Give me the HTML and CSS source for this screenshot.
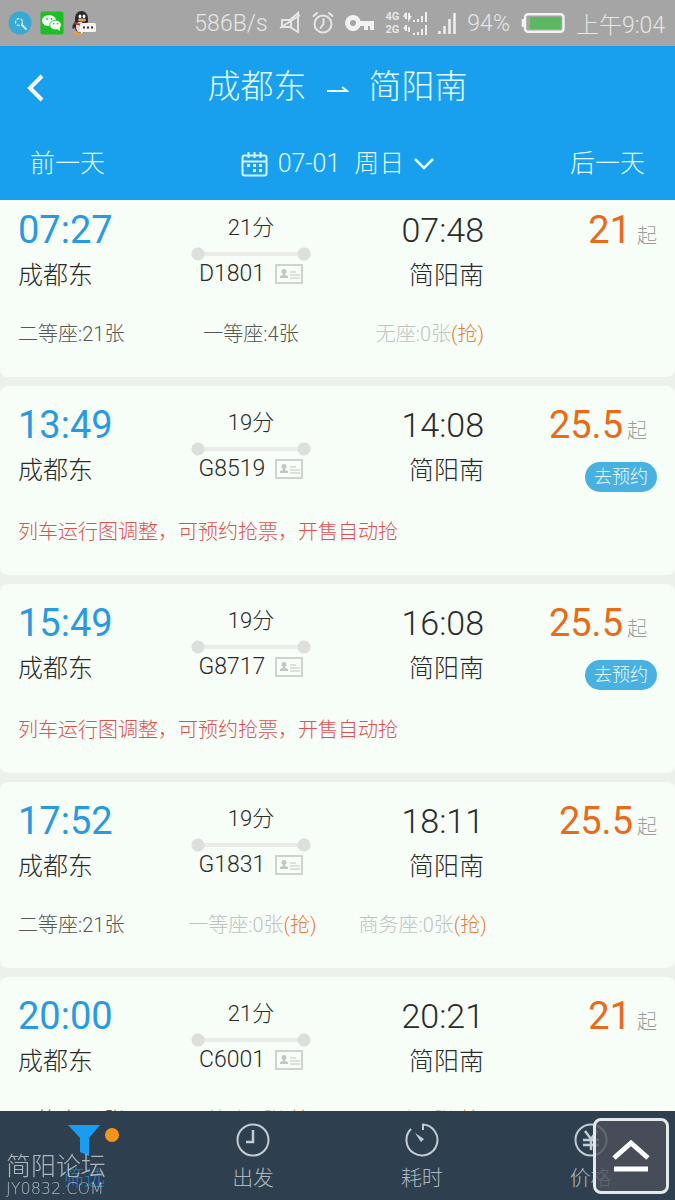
FILE: index.html
```html
<!DOCTYPE html>
<html lang="zh-CN">
<head>
    <meta charset="UTF-8">
    <meta name="viewport" content="width=device-width, initial-scale=1.0">
    <title>成都东 - 简阳南</title>
    <link rel="stylesheet" href="styles.css">
</head>
<body>
    <svg class="sprite" width="0" height="0" aria-hidden="true">
        <symbol id="id-card" viewBox="0 0 28 20">
            <rect x="1" y="1" width="26" height="18" fill="none" stroke="#cfd3cf" stroke-width="2"/>
            <circle cx="9" cy="7.500" r="2.500" fill="#c3c7c3"/>
            <path d="M8 9h2v2l3 1v2H5v-2l3-1z" fill="#c3c7c3"/>
            <path d="M15 8h6M15 11h10M15 14h10" stroke="#d3d7d3" stroke-width="1.500"/>
        </symbol>
    </svg>

    <div class="status-bar">
        <div class="status-apps">
            <svg width="24" height="24" viewBox="0 0 24 24">
                <circle cx="12" cy="12" r="11.500" fill="#36a9d4"/>
                <circle cx="11" cy="11" r="3.500" fill="none" stroke="#c9ecf8" stroke-width="1.300" stroke-dasharray="3 1.500"/>
                <path d="M14 14l4 4" stroke="#c9ecf8" stroke-width="2" stroke-linecap="round"/>
            </svg>
            <svg width="24" height="24" viewBox="0 0 24 24">
                <rect x="0.500" y="0.500" width="23" height="23" rx="2" fill="#1fbe27"/>
                <path d="M4 15l1-3h3z" fill="#f2fff2"/>
                <ellipse cx="9" cy="9.500" rx="7" ry="5.500" fill="#f2fff2"/>
                <ellipse cx="15.500" cy="14" rx="5.800" ry="4.800" fill="#f2fff2" stroke="#1fbe27" stroke-width="0.800"/>
                <path d="M17 18l3 2v-3z" fill="#f2fff2"/>
                <circle cx="7" cy="8" r="0.900" fill="#1fbe27"/>
                <circle cx="11.500" cy="8" r="0.900" fill="#1fbe27"/>
                <circle cx="13.800" cy="12.800" r="0.800" fill="#1fbe27"/>
                <circle cx="17.500" cy="12.800" r="0.800" fill="#1fbe27"/>
            </svg>
            <svg width="24" height="24" viewBox="0 0 24 24">
                <ellipse cx="6" cy="22" rx="4" ry="2" fill="#e9a13a"/>
                <path d="M2 12c-2 3-2 5-1 6l3-3z" fill="#33272a"/>
                <ellipse cx="9" cy="14" rx="7" ry="8" fill="#3b2b2c"/>
                <ellipse cx="8" cy="16" rx="4" ry="5.500" fill="#e8ddd6"/>
                <path d="M3 8c0-5 3-8 6.500-8S16 3 16 8v3H3z" fill="#252a33"/>
                <ellipse cx="8" cy="5.500" rx="1.400" ry="2" fill="#fff"/>
                <ellipse cx="12" cy="5.500" rx="1.400" ry="2" fill="#fff"/>
                <ellipse cx="10" cy="9" rx="4" ry="1.500" fill="#e9a13a"/>
                <path d="M3 11c4 2 9 2 13 0v2c-4 2-9 2-13 0z" fill="#b5392f"/>
                <rect x="8" y="12" width="16" height="9" rx="1.500" fill="#f6f3ee"/>
                <path d="M9 20v3l4-3z" fill="#f6f3ee"/>
                <path d="M11 16.500h2M15 16.500h2M19 16.500h2" stroke="#333" stroke-width="2"/>
            </svg>
        </div>
        <div class="status-info">
            <span>586B/s</span>
            <svg width="22" height="24" viewBox="0 0 22 24" fill="none" stroke="#e6e6e6" stroke-width="2">
                <path d="M19 2v19l-8-5H3V9h8z"/>
                <path d="M1 17L21 4M12 9v7"/>
            </svg>
            <svg width="22" height="24" viewBox="0 0 22 24" fill="none" stroke="#e6e6e6" stroke-width="2" stroke-linecap="round">
                <circle cx="11" cy="13" r="8.500"/>
                <path d="M11.500 8v5l-3 4M1.500 5L5 2M17 2l3.500 3"/>
            </svg>
            <svg width="30" height="20" viewBox="0 0 30 20">
                <path d="M8 2a8 8 0 1 0 7.500 11H19v4h4v-4h2v4h4V8H15.500A8 8 0 0 0 8 2zm0 5a3 3 0 1 1 0 6 3 3 0 0 1 0-6z" fill="#f2f2f2" fill-rule="evenodd"/>
            </svg>
            <div class="sims">
                <div class="sim">4G
                    <svg width="24" height="10" viewBox="0 0 24 10" stroke="#eee" stroke-width="2"><path d="M1 5l2-4v6M6 1v6l2-3M11 10V8M15 10V7M19 10V4M23 10V0" fill="none"/></svg>
                </div>
                <div class="sim">2G
                    <svg width="24" height="10" viewBox="0 0 24 10" stroke="#eee" stroke-width="2"><path d="M1 4l2-3v5M6 2v5M11 10V8M15 10V7M19 10V4M23 10V0" fill="none"/></svg>
                </div>
            </div>
            <svg width="18" height="22" viewBox="0 0 18 22" stroke="#efefef" stroke-width="2.500">
                <path d="M1.500 22v-3M6.500 22v-8M11.500 22V7M16.500 22V1"/>
            </svg>
            <span>94%</span>
            <svg width="44" height="20" viewBox="0 0 44 20">
                <rect x="4" y="1.200" width="38.500" height="17.600" rx="3" fill="#a5a5a5" stroke="#f2f2f2" stroke-width="2.400"/>
                <path d="M2 6v8" stroke="#f2f2f2" stroke-width="2.500"/>
                <rect x="9" y="4" width="31" height="12" fill="#5cb860"/>
            </svg>
            <span>上午9:04</span>
        </div>
    </div>

    <header class="header">
        <div class="title-row">
            <button class="icon-button" aria-label="返回">
                <svg width="20" height="28" viewBox="0 0 20 28" fill="none" stroke="#fff" stroke-width="4">
                    <path d="M18 2L6 14l12 12"/>
                </svg>
            </button>
            <h1 class="route">
                <span>成都东</span>
                <svg class="route-arrow" width="22" height="8" viewBox="0 0 22 8" fill="none" stroke="#e2fcff" stroke-width="2"><path d="M0 6h20l-5-4"/></svg>
                <span>简阳南</span>
            </h1>
        </div>
        <div class="date-row">
            <button class="day-button">前一天</button>
            <button class="day-button date-button">
                <svg width="27" height="25" viewBox="0 0 27 25" fill="none" stroke="#d8f6ff" stroke-width="2">
                    <rect x="1.500" y="3.500" width="24" height="20" rx="2"/>
                    <path d="M1.500 9.500h24M7.500 0v6M13.500 0v6M19.500 0v6"/>
                    <path d="M6 13.500h3M12 13.500h3M18 13.500h3M12 18.500h3M18 18.500h3" stroke-width="3"/>
                </svg>
                <span>07-01</span>
                <span class="weekday">周日</span>
                <svg width="20" height="12" viewBox="0 0 20 12" fill="none" stroke="#e2fcff" stroke-width="2.500"><path d="M1 1l9 9 9-9"/></svg>
            </button>
            <button class="day-button">后一天</button>
        </div>
    </header>

    <main class="train-list">
        <article class="train-card">
            <div class="train-head">
                <div class="depart">
                    <div class="time">07:27</div>
                    <div class="station">成都东</div>
                </div>
                <div class="journey">
                    <div class="duration">21分</div>
                    <div class="track"></div>
                    <div class="train-no">D1801 <svg width="28" height="20"><use href="#id-card"/></svg></div>
                </div>
                <div class="arrive">
                    <div class="time">07:48</div>
                    <div class="station">简阳南</div>
                </div>
                <div class="price-box">
                    <div class="price">21<span class="from spaced">起</span></div>
                </div>
            </div>
            <div class="seats">
                <div class="seat">二等座:21张</div>
                <div class="seat">一等座:4张</div>
                <div class="seat sold-out">无座:0张<span class="grab">(抢)</span></div>
            </div>
        </article>

        <article class="train-card">
            <div class="train-head">
                <div class="depart">
                    <div class="time">13:49</div>
                    <div class="station">成都东</div>
                </div>
                <div class="journey">
                    <div class="duration">19分</div>
                    <div class="track"></div>
                    <div class="train-no">G8519 <svg width="28" height="20"><use href="#id-card"/></svg></div>
                </div>
                <div class="arrive">
                    <div class="time">14:08</div>
                    <div class="station">简阳南</div>
                </div>
                <div class="price-box bookable">
                    <div class="price">25.5<span class="from">起</span></div>
                    <button class="book-button">去预约</button>
                </div>
            </div>
            <p class="notice">列车运行图调整，可预约抢票，开售自动抢</p>
        </article>

        <article class="train-card">
            <div class="train-head">
                <div class="depart">
                    <div class="time">15:49</div>
                    <div class="station">成都东</div>
                </div>
                <div class="journey">
                    <div class="duration">19分</div>
                    <div class="track"></div>
                    <div class="train-no">G8717 <svg width="28" height="20"><use href="#id-card"/></svg></div>
                </div>
                <div class="arrive">
                    <div class="time">16:08</div>
                    <div class="station">简阳南</div>
                </div>
                <div class="price-box bookable">
                    <div class="price">25.5<span class="from">起</span></div>
                    <button class="book-button">去预约</button>
                </div>
            </div>
            <p class="notice">列车运行图调整，可预约抢票，开售自动抢</p>
        </article>

        <article class="train-card">
            <div class="train-head">
                <div class="depart">
                    <div class="time">17:52</div>
                    <div class="station">成都东</div>
                </div>
                <div class="journey">
                    <div class="duration">19分</div>
                    <div class="track"></div>
                    <div class="train-no">G1831 <svg width="28" height="20"><use href="#id-card"/></svg></div>
                </div>
                <div class="arrive">
                    <div class="time">18:11</div>
                    <div class="station">简阳南</div>
                </div>
                <div class="price-box">
                    <div class="price">25.5<span class="from">起</span></div>
                </div>
            </div>
            <div class="seats">
                <div class="seat">二等座:21张</div>
                <div class="seat sold-out">一等座:0张<span class="grab">(抢)</span></div>
                <div class="seat sold-out">商务座:0张<span class="grab">(抢)</span></div>
            </div>
        </article>

        <article class="train-card">
            <div class="train-head">
                <div class="depart">
                    <div class="time">20:00</div>
                    <div class="station">成都东</div>
                </div>
                <div class="journey">
                    <div class="duration">21分</div>
                    <div class="track"></div>
                    <div class="train-no">C6001 <svg width="28" height="20"><use href="#id-card"/></svg></div>
                </div>
                <div class="arrive">
                    <div class="time">20:21</div>
                    <div class="station">简阳南</div>
                </div>
                <div class="price-box">
                    <div class="price">21<span class="from spaced">起</span></div>
                </div>
            </div>
            <div class="seats">
                <div class="seat">二等座:21张</div>
                <div class="seat sold-out">一等座:0张<span class="grab">(抢)</span></div>
                <div class="seat sold-out">无座:0张<span class="grab">(抢)</span></div>
            </div>
        </article>
    </main>

    <nav class="tab-bar">
        <button class="tab active">
            <span class="tab-icon">
                <svg width="34" height="34" viewBox="0 0 34 34"><path d="M1 2h32L22 15v18l-9-4V15z" fill="#1a9df0"/></svg>
                <span class="dot"></span>
            </span>
            筛选
        </button>
        <button class="tab">
            <svg width="34" height="34" viewBox="0 0 34 34" fill="none" stroke="#c3ccd2" stroke-width="2">
                <circle cx="17" cy="17" r="15.500"/>
                <path d="M17 7v12h-7" stroke-width="2.500"/>
            </svg>
            出发
        </button>
        <button class="tab">
            <svg width="34" height="34" viewBox="0 0 34 34" fill="none" stroke="#c3ccd2" stroke-width="2">
                <path d="M6 6a15.500 15.500 0 1 0 12-4.500V7"/>
                <path d="M10 10l9 6-3 3z" fill="#c3ccd2" stroke="none"/>
            </svg>
            耗时
        </button>
        <button class="tab">
            <svg width="34" height="34" viewBox="0 0 34 34" fill="none" stroke="#c3ccd2" stroke-width="2">
                <circle cx="17" cy="17" r="15.500"/>
                <path d="M11 8l6 8 6-8M17 16v11M9 17h16M9 22h16" stroke-width="2.500"/>
            </svg>
            价格
        </button>
    </nav>

    <div class="watermark">
        <div class="watermark-name">简阳论坛</div>
        <div class="watermark-site">JY0832.COM</div>
    </div>

    <button class="top-button" aria-label="回到顶部">
        <svg width="38" height="34" viewBox="0 0 38 34" fill="none" stroke="#fff" stroke-width="5">
            <path d="M2 19L19 4l17 15M2 30h34"/>
        </svg>
    </button>
</body>
</html>
```
FILE: styles.css
```css
* {
    margin: 0;
    padding: 0;
    box-sizing: border-box;
}

body {
    font-family: Roboto, 'Noto Sans CJK SC', sans-serif;
    font-weight: 300;
    background: #edf1ec;
    color: #2b2b2b;
    height: 100vh;
    display: flex;
    flex-direction: column;
    overflow: hidden;
}

button {
    font: inherit;
    color: inherit;
    background: none;
    border: none;
    cursor: pointer;
}

svg {
    display: block;
    flex-shrink: 0;
}

.sprite {
    position: absolute;
}

/* Status bar */
.status-bar {
    height: 46px;
    padding: 0 10px 0 8px;
    background: #a5a5a5;
    color: #e6e6e6;
    display: flex;
    align-items: center;
    justify-content: space-between;
    flex-shrink: 0;
    font-size: 23px;
    white-space: nowrap;
}

.status-apps {
    display: flex;
    gap: 8px;
}

.status-info {
    display: flex;
    align-items: center;
    gap: 11px;
}

.sim {
    display: flex;
    align-items: center;
    gap: 4px;
    font-size: 11px;
    font-weight: 700;
    line-height: 13px;
}

/* Header */
.header {
    background: #189fee;
    color: #e2fcff;
    flex-shrink: 0;
    padding: 14px 24px 0;
    height: 154px;
}

.title-row {
    display: grid;
    grid-template-columns: 30px 1fr 30px;
    align-items: center;
    height: 54px;
}

.icon-button {
    padding-top: 2px;
}

.route {
    display: flex;
    align-items: center;
    justify-content: center;
    gap: 20px;
    font-size: 33px;
    font-weight: 300;
    line-height: 50px;
}

.route-arrow {
    margin-top: 4px;
}

.date-row {
    display: flex;
    align-items: center;
    justify-content: space-between;
    padding: 0 6px;
    margin-top: 32px;
}

.day-button {
    font-size: 25px;
    line-height: 36px;
}

.date-button {
    display: flex;
    align-items: center;
    gap: 10px;
}

.weekday {
    margin-left: 4px;
}

/* Train list */
.train-list {
    flex: 1;
    min-height: 0;
    overflow: hidden;
    display: flex;
    flex-direction: column;
    gap: 9px;
}

.train-card {
    background: #f7fdf7;
    border-radius: 8px;
    padding: 18px 18px 31px;
    flex-shrink: 0;
}

.train-card:first-child {
    border-radius: 0 0 8px 8px;
    padding-top: 9px;
}

.train-head,
.seats {
    display: grid;
    grid-template-columns: 173fr 120fr 173fr 173fr;
}

.time {
    font-size: 34px;
    line-height: 42px;
}

.station {
    font-size: 25px;
    line-height: 30px;
    margin-top: 10px;
}

.depart .time {
    font-size: 38px;
    font-weight: 400;
    color: #2a9ae0;
}

.arrive {
    text-align: right;
}

.journey {
    text-align: center;
}

.duration {
    font-size: 22px;
    line-height: 38px;
}

.track {
    height: 14px;
    background:
        radial-gradient(circle at 7px 7px, #dcdfdb 6px, transparent 7px),
        radial-gradient(circle at calc(100% - 7px) 7px, #dcdfdb 6px, transparent 7px),
        linear-gradient(#e9ece8, #e9ece8) center / 90% 4px no-repeat;
}

.train-no {
    display: flex;
    align-items: center;
    justify-content: center;
    gap: 10px;
    font-size: 23px;
    line-height: 26px;
}

.price-box {
    display: flex;
    flex-direction: column;
    align-items: flex-end;
}

.price {
    font-size: 38px;
    font-weight: 400;
    line-height: 42px;
    color: #ea6a1c;
}

.from {
    font-size: 20px;
    font-weight: 300;
    color: #9a9d9a;
    margin-left: 4px;
}

.from.spaced {
    margin-left: 6px;
}

.bookable .price {
    margin-right: 10px;
}

.book-button {
    background: #49b1e2;
    color: #e8fbff;
    border-radius: 15px;
    padding: 0 9px;
    font-size: 18px;
    line-height: 30px;
    margin-top: 10px;
}

.seats {
    margin-top: 31px;
    font-size: 20px;
    line-height: 24px;
    color: #555855;
    white-space: nowrap;
}

.seat {
    display: flex;
}

.seat:nth-child(2) {
    justify-content: center;
}

.seat:nth-child(3) {
    justify-content: flex-end;
}

.sold-out {
    color: #c0c3c0;
}

.grab {
    color: #ea7a3c;
}

.notice {
    margin-top: 28px;
    font-size: 20px;
    line-height: 24px;
    color: #e2504e;
}

/* Bottom tabs */
.tab-bar {
    display: grid;
    grid-template-columns: repeat(4, 1fr);
    flex-shrink: 0;
    height: 89px;
    background: #2e404f;
    color: #aab6be;
}

.tab {
    display: flex;
    flex-direction: column;
    align-items: center;
    padding-top: 12px;
    gap: 6px;
    font-size: 21px;
    line-height: 30px;
}

.tab.active {
    color: #1a7fc0;
}

.tab-icon {
    position: relative;
}

.dot {
    position: absolute;
    top: 5px;
    left: 38px;
    width: 14px;
    height: 14px;
    border-radius: 50%;
    background: #f7941d;
}

/* Floating items over the tabs */
.watermark {
    position: fixed;
    left: 6px;
    bottom: 3px;
    color: rgba(215, 220, 224, 0.75);
}

.watermark-name {
    font-size: 25px;
    line-height: 28px;
}

.watermark-site {
    font-family: 'DejaVu Sans', sans-serif;
    font-size: 16px;
    font-weight: 200;
    line-height: 16px;
}

.top-button {
    position: fixed;
    right: 6px;
    bottom: 6px;
    width: 76px;
    height: 76px;
    border: 3px solid #e4e8ea;
    border-radius: 8px;
    background: rgba(76, 80, 90, 0.8);
    display: flex;
    align-items: center;
    justify-content: center;
}
```
